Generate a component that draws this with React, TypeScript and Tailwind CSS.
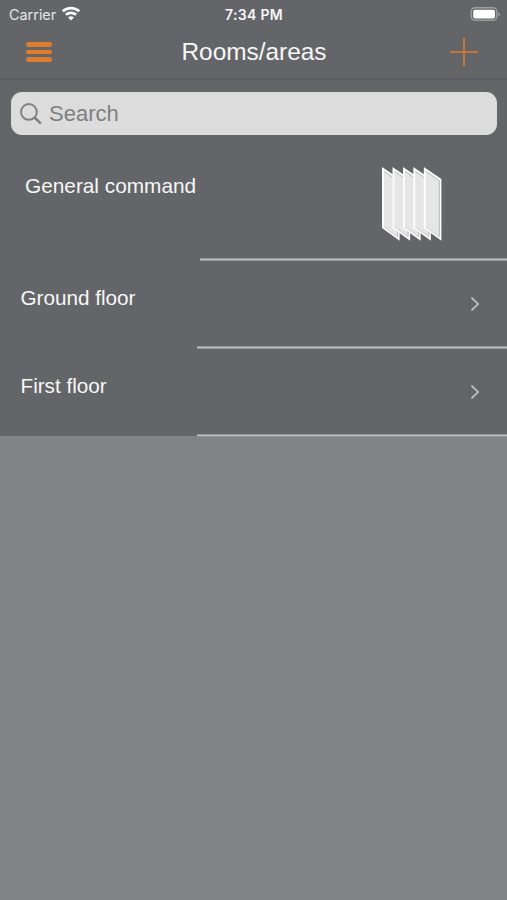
const rooms = [
  { id: 'ground', name: 'Ground floor' },
  { id: 'first', name: 'First floor' },
];

const slats = [382, 392.5, 403, 413.3, 423.8];

function WifiIcon() {
  return (
    <svg viewBox="0 0 20 16" className="w-5 h-4" fill="none" stroke="#f8f8f8" strokeWidth="2.7">
      <path d="M1.7 5.3a12.2 12.2 0 0 1 16.6 0" />
      <path d="M4.9 8.8a7.5 7.5 0 0 1 10.2 0" />
      <path d="M10 14.5 7.1 11.6a4.1 4.1 0 0 1 5.8 0Z" fill="#f8f8f8" stroke="none" />
    </svg>
  );
}

function BatteryIcon() {
  return (
    <svg viewBox="0 0 32 16" className="w-8 h-4" fill="none">
      <rect x="1.2" y="1.7" width="25.6" height="12.6" rx="3.8" stroke="#9d9ea0" strokeWidth="1.4" />
      <rect x="3.2" y="3.7" width="21.8" height="8.9" rx="1.8" fill="#fff" />
      <path d="M28.2 5.9c2.2.8 2.2 3.6 0 4.4Z" fill="#9d9ea0" />
    </svg>
  );
}

function BlindsIcon() {
  return (
    <svg viewBox="381 165 62 78" className="w-[62px] h-[78px]">
      {slats.map(x => (
        <g key={x} transform={`translate(${x} 167)`}>
          <path d="M0 0 17.6 12V73.8L0 61Z" fill="#fcfcfc" />
          <path d="M2 4 15.6 13.3V69.8L2 59.8Z" fill="#e6e6e6" />
          <path d="M2 4.3 15.6 13.6V69.8" fill="none" stroke="#b2b2b3" strokeWidth="0.9" />
          <path d="M2 59.8 15.6 69.8" fill="none" stroke="#c4c4c5" strokeWidth="0.8" />
        </g>
      ))}
    </svg>
  );
}

function Chevron() {
  return (
    <svg viewBox="0 0 10 16" className="w-2.5 h-4" fill="none" stroke="#c4c5c7" strokeWidth="1.7">
      <path d="m1.5 1.6 6.6 6.4-6.6 6.4" />
    </svg>
  );
}

export default function App() {
  return (
    <div className="w-[507px] h-[900px] bg-[#828384] overflow-hidden text-[#f7f7f7] font-['Liberation_Sans',Arial,sans-serif]">
      <header className="h-20 bg-[#646568] border-b border-[#5b5a5e]">
        <div className="h-[27px] grid grid-cols-3 items-center">
          <div className="flex items-center gap-[5px] pl-[9px]">
            <span className="font-[Inter,sans-serif] text-[14.4px] leading-[27px] text-[#e5e5e6]">Carrier</span>
            <WifiIcon />
          </div>
          <span className="font-[Inter,sans-serif] text-center text-[14px] leading-[27px] font-semibold tracking-[0.3px] pt-px pl-px">7:34 PM</span>
          <div className="flex justify-end pr-[5px]">
            <BatteryIcon />
          </div>
        </div>
        <div className="h-[50px] flex items-center justify-between pl-[26px] pr-[29px]">
          <button aria-label="Menu" className="w-[26px] flex flex-col gap-[3px]">
            <span className="h-[4.5px] rounded-full bg-[#e07c2e]" />
            <span className="h-[4.5px] rounded-full bg-[#e07c2e]" />
            <span className="h-[4.5px] rounded-full bg-[#e07c2e]" />
          </button>
          <h1 className="text-[24.4px] leading-[50px] pl-[6px]">Rooms/areas</h1>
          <button aria-label="Add">
            <svg viewBox="0 0 28 28" className="w-7 h-7" stroke="#e07c2e" strokeWidth="1.5">
              <path d="M0 14h28M14 0v28" />
            </svg>
          </button>
        </div>
      </header>

      <main className="h-[356px] bg-[#646568]">
        <div className="pt-3 pl-[11px] pr-2.5">
          <div className="h-[43px] rounded-[11px] bg-[#dcdcdc] flex items-center gap-[7px] pl-[9px] text-[#7f7f82]">
            <svg viewBox="0 0 22 22" className="w-[22px] h-[22px]" fill="none" stroke="currentColor" strokeWidth="1.9">
              <circle cx="8.9" cy="8.9" r="7.9" />
              <path d="m14.5 14.5 6.4 6.2" strokeWidth="2.5" />
            </svg>
            <span className="text-[22px]">Search</span>
          </div>
        </div>

        <div className="h-[126px] flex flex-col">
          <div className="flex-1 flex justify-between pl-[25px] pr-16 pt-[30px]">
            <span className="text-[20.8px] leading-6 pt-[9px]">General command</span>
            <BlindsIcon />
          </div>
          <div className="h-[3px] ml-[200px] bg-[#c2c3c5] border-y border-[#929395]" />
        </div>

        {rooms.map(room => (
          <div key={room.id} className="h-[88px] flex flex-col">
            <div className="flex-1 flex justify-between pl-[20.5px] pr-[27px]">
              <span className="text-[20.7px] leading-6 pt-[25px]">{room.name}</span>
              <span className="pt-[35px]"><Chevron /></span>
            </div>
            <div className="h-[3px] ml-[197px] bg-[#c2c3c5] border-y border-[#929395]" />
          </div>
        ))}
      </main>
    </div>
  );
}
